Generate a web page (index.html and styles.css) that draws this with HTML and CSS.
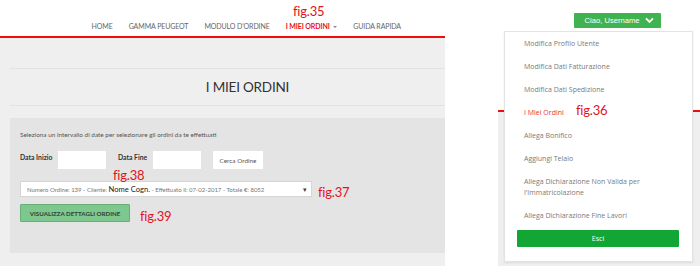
FILE: index.html
```html
<!DOCTYPE html>
<html lang="it">
<head>
<meta charset="utf-8">
<title>I miei ordini</title>
<link rel="stylesheet" href="styles.css">
</head>
<body>
<div class="sheet">
  <section class="shot-left">
    <header class="topbar">
      <nav class="nav">
        <a class="nav-item">HOME</a>
        <a class="nav-item">GAMMA PEUGEOT</a>
        <a class="nav-item">MODULO D'ORDINE</a>
        <a class="nav-item active">I MIEI ORDINI <span class="caret"></span></a>
        <a class="nav-item">GUIDA RAPIDA</a>
      </nav>
      <span class="fig fig35">fig.35</span>
    </header>
    <div class="page">
      <div class="title-band"><h1>I MIEI ORDINI</h1></div>
      <div class="box">
        <p class="hint">Seleziona un intervallo di date per selezionare gli ordini da te effettuati</p>
        <div class="filters">
          <label class="lbl">Data Inizio</label>
          <span class="field"></span>
          <label class="lbl lbl2">Data Fine</label>
          <span class="field"></span>
          <span class="btn-white">Cerca Ordine</span>
        </div>
        <div class="select">
          <span>Numero Ordine: 139 - Cliente: <b class="name">Nome Cogn.</b> - Effettuato il: 07-02-2017 - Totale €: 8052</span>
          <span class="tri">▾</span>
        </div>
        <div class="btn-green">VISUALIZZA DETTAGLI ORDINE</div>
      </div>
      <span class="fig fig38">fig.38</span>
      <span class="fig fig37">fig.37</span>
      <span class="fig fig39">fig.39</span>
    </div>
  </section>

  <section class="shot-right">
    <div class="rtop">
      <span class="ciao">Ciao, Username
        <svg class="chev" viewBox="0 0 10 8" width="9" height="7"><path d="M1 1.5 L5 5.5 L9 1.5" fill="none" stroke="#fff" stroke-width="2.2"/></svg>
      </span>
    </div>
    <div class="rpage"></div>
    <div class="dropdown">
      <ul class="menu">
        <li>Modifica Profilo Utente</li>
        <li>Modifica Dati Fatturazione</li>
        <li>Modifica Dati Spedizione</li>
        <li class="cur">I Miei Ordini</li>
        <li>Allega Bonifico</li>
        <li>Aggiungi Telaio</li>
        <li>Allega Dichiarazione Non Valida per l'Immatricolazione</li>
        <li>Allega Dichiarazione Fine Lavori</li>
      </ul>
      <div class="esci">Esci</div>
    </div>
    <span class="fig fig36">fig.36</span>
  </section>
</div>
</body>
</html>
```
FILE: styles.css
```css
* { box-sizing: border-box; }
html, body { margin: 0; padding: 0; background: #fff; }
body { width: 700px; height: 266px; overflow: hidden; font-family: Lato, "Liberation Sans", sans-serif; }

.sheet { display: flex; width: 700px; height: 266px; }

.shot-left { width: 445px; height: 266px; display: flex; flex-direction: column; position: relative; }

.topbar { height: 38px; background: #fff; border-bottom: 2px solid #f20d0d; position: relative; display: flex; align-items: center; justify-content: flex-end; padding-right: 44px; flex: 0 0 auto; }
.nav { display: flex; gap: 16px; margin-top: 15px; }
.nav-item { font-size: 7px; color: #666; letter-spacing: -0.1px; }
.nav-item.active { color: #e8121b; font-weight: bold; }
.caret { display: inline-block; width: 0; height: 0; border-left: 2px solid transparent; border-right: 2px solid transparent; border-top: 2px solid #888; vertical-align: middle; margin-left: 2px; }

.page { flex: 1; background: #efefef; padding-left: 10px; position: relative; }
.title-band { margin-top: 30px; height: 38px; border-top: 1px solid #e2e2e2; border-bottom: 1px solid #e2e2e2; display: flex; align-items: center; justify-content: center; padding-left: 40px; }
.title-band h1 { margin: 0; font-size: 13.5px; font-weight: normal; color: #333; letter-spacing: -0.2px; }

.box { margin-top: 12px; height: 135px; background: #e4e4e4; padding: 13px 10px 0; }
.hint { margin: 0; font-size: 6.4px; color: #555; line-height: 8px; }
.filters { display: flex; align-items: flex-start; margin-top: 12px; height: 18px; }
.lbl { font-size: 6.8px; font-weight: bold; color: #333; margin-top: 2px; width: 38px; }
.lbl2 { margin-left: 12px; width: 35px; }
.field { width: 48px; height: 18px; background: #fff; }
.btn-white { margin-left: 12px; width: 50px; height: 18px; background: #fff; font-size: 6.4px; color: #555; display: flex; align-items: center; justify-content: center; }

.select { margin-top: 12px; width: 292px; height: 16px; background: #fff; border: 1px solid #d5d5d5; display: flex; align-items: center; justify-content: space-between; padding: 0 4px 0 6px; font-size: 6px; color: #777; white-space: nowrap; }
.select .name { font-size: 7.6px; font-weight: normal; color: #222; }
.tri { font-size: 7px; color: #444; }

.btn-green { margin-top: 7px; width: 110px; height: 18px; background: #7ec78f; border: 1px solid #66b078; border-radius: 1px; font-size: 6.2px; font-weight: bold; color: #2e4434; display: flex; align-items: center; justify-content: center; }

.fig { position: absolute; font-family: Lato, "Liberation Sans", sans-serif; font-size: 13px; color: #e0141e; line-height: 13px; letter-spacing: -0.2px; }
.fig35 { left: 293px; top: 5px; }
.fig38 { left: 113px; top: 131px; }
.fig37 { left: 318px; top: 148px; }
.fig39 { left: 140px; top: 172px; }

.shot-right { margin-left: 53px; width: 202px; height: 266px; position: relative; display: flex; flex-direction: column; }
.rtop { height: 112px; background: #fff; border-bottom: 2px solid #f20d0d; display: flex; align-items: flex-start; padding: 13px 0 0 76px; }
.ciao { width: 87px; height: 15px; background: #3fb34f; border-radius: 1px; color: #fff; font-size: 7.6px; display: flex; align-items: center; justify-content: center; gap: 6px; padding-left: 4px; font-family: "Liberation Sans", Arial, sans-serif; }
.rpage { flex: 1; background: #efefef; }

.dropdown { position: absolute; left: 6px; top: 31px; width: 189px; height: 231px; background: #fff; border: 1px solid #e3e3e3; box-shadow: 0 1px 2px rgba(0,0,0,0.08); padding: 0 13px 0 12px; }
.menu { list-style: none; margin: 0; padding: 0 0 0 7px; }
.menu li { padding: 6px 0; line-height: 11px; font-family: "Open Sans", Roboto, "Liberation Sans", sans-serif; font-size: 7px; font-weight: 400; color: #7a7a7a; padding-right: 20px; }
.menu li.cur { color: #e8323a; }
.esci { margin-top: 3px; height: 17px; background: #12a634; border-radius: 1px; color: #fff; font-size: 7px; display: flex; align-items: center; justify-content: center; font-family: "Open Sans", Roboto, "Liberation Sans", sans-serif; }
.fig36 { left: 78px; top: 104px; }
```
